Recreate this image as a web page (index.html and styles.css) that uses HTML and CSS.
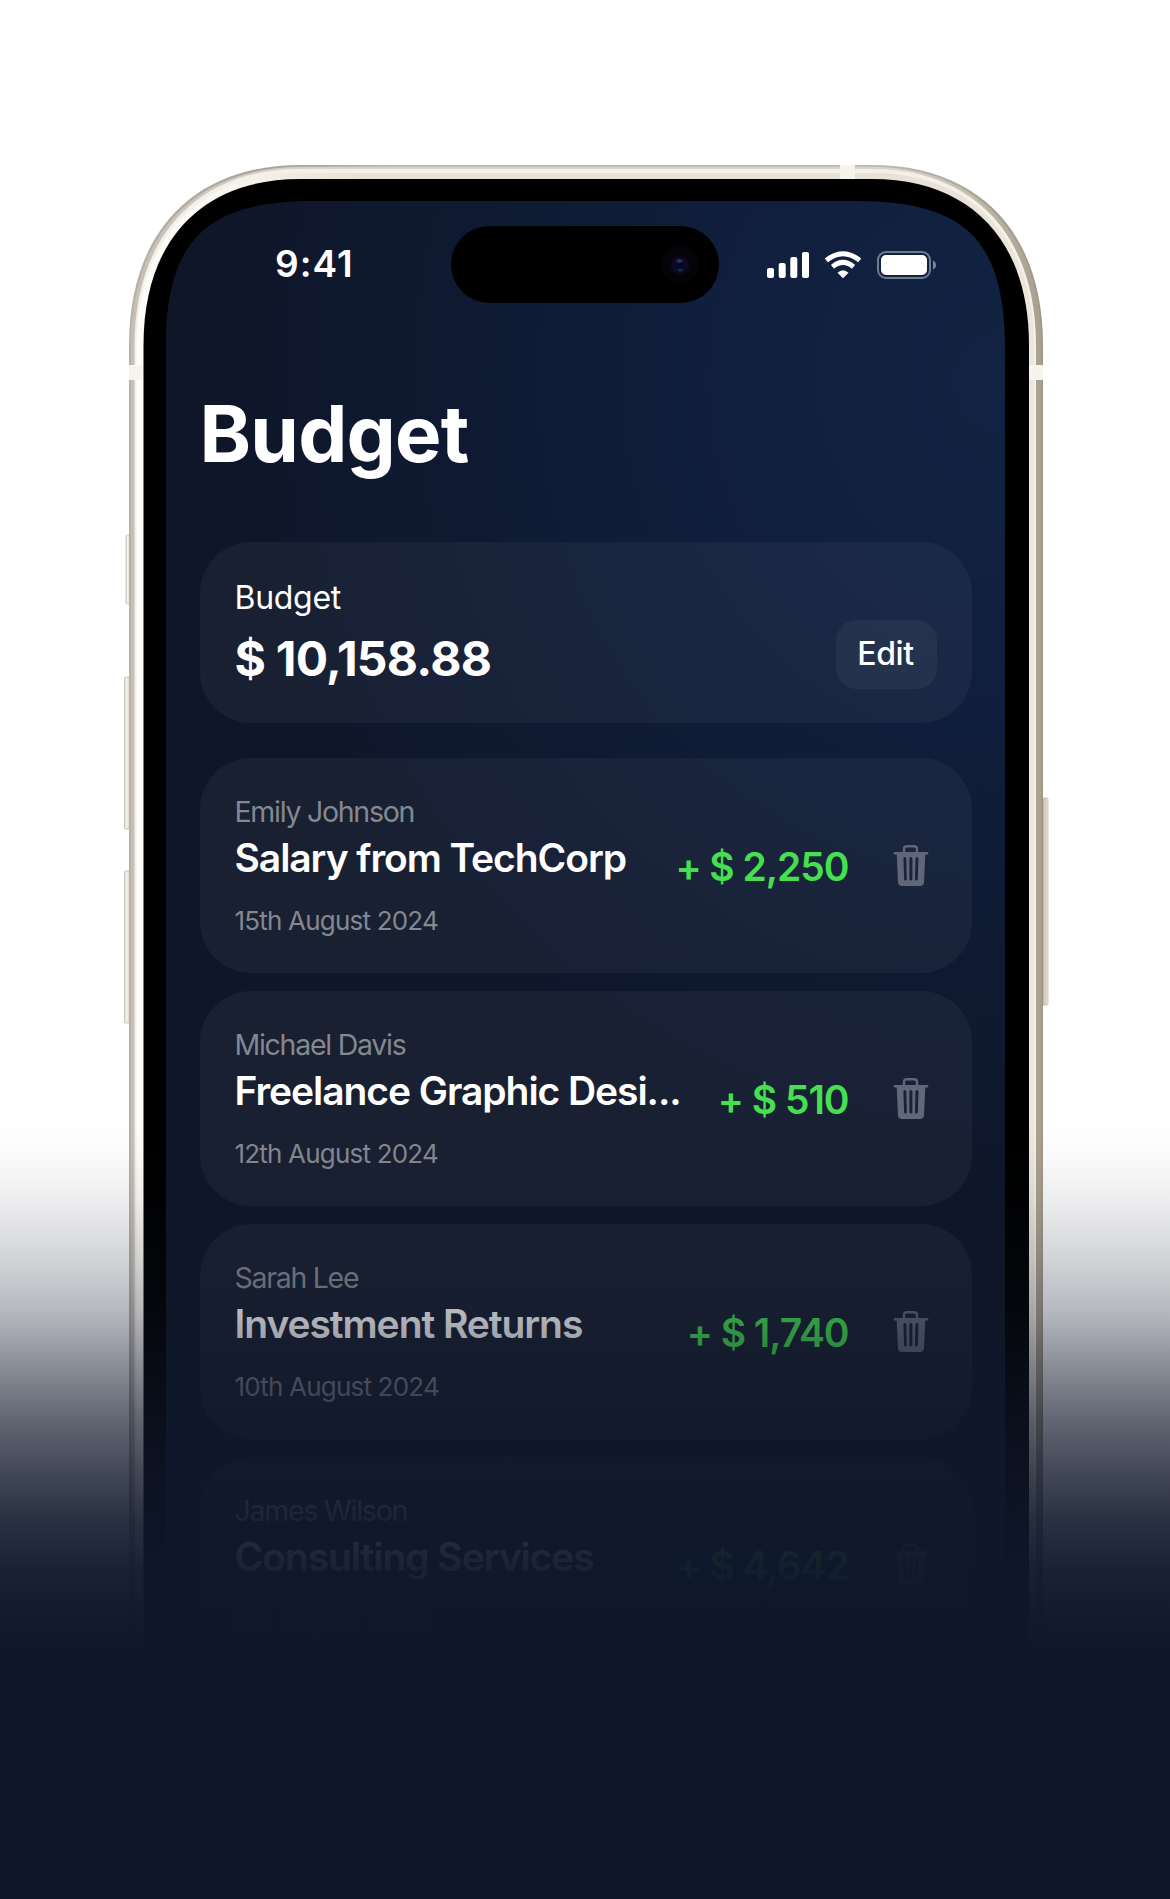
FILE: index.html
```html
<!DOCTYPE html>
<html lang="en">
<head>
<meta charset="utf-8">
<title>Budget</title>
<link rel="stylesheet" href="styles.css">
</head>
<body>
<svg class="defs" width="0" height="0" aria-hidden="true">
  <symbol id="trash" viewBox="0 0 36 43">
    <path fill="none" stroke="currentColor" stroke-width="2.4" d="M11 9V5.2Q11 2.2 14 2.2H21Q24 2.2 24 5.2V9"/>
    <path fill="currentColor" fill-rule="evenodd" d="M1.8 8H34.2Q35.4 8 35.4 9.3T34.2 10.6H32.3L31 38Q30.8 42 27 42H9Q5.200 42 5 38L3.700 10.600H1.800Q.6 10.600.6 9.300T1.800 8ZM10.400 14.500Q10.500 13 11.800 13T13.300 14.500L13.800 35.200Q13.700 36.600 12.500 36.600T11.100 35.200ZM16.400 14.500Q16.500 13 17.900 13T19.400 14.500V35.200Q19.300 36.600 17.900 36.600T16.400 35.200ZM22.500 14.500Q22.700 13 24 13T25.400 14.500L24.800 35.200Q24.600 36.600 23.400 36.600T22 35.200Z"/>
  </symbol>
</svg>
<main class="stage">
  <svg class="frame" viewBox="0 0 1170 1899" aria-hidden="true">
    <defs>
      <linearGradient id="key" x1="0" x2="1" y1="0" y2="0"><stop offset="0" stop-color="#d8d4cb"/><stop offset=".3" stop-color="#f6f4ee"/><stop offset="1" stop-color="#d8cfbf"/></linearGradient>
      <linearGradient id="keyR" x1="0" x2="1" y1="0" y2="0"><stop offset="0" stop-color="#aaa090"/><stop offset=".4" stop-color="#d5c9b5"/><stop offset=".7" stop-color="#ddd2c0"/><stop offset="1" stop-color="#f4f2ed"/></linearGradient>
      <linearGradient id="metal" gradientUnits="userSpaceOnUse" x1="129" x2="1043" y1="0" y2="0"><stop offset="0" stop-color="#bab2a8"/><stop offset=".15" stop-color="#a9a299"/><stop offset=".3" stop-color="#c2bfb0"/><stop offset=".8" stop-color="#c2bfb0"/><stop offset="1" stop-color="#9f9686"/></linearGradient>
      <linearGradient id="band" gradientUnits="userSpaceOnUse" x1="129" x2="1043" y1="0" y2="0"><stop offset="0" stop-color="#c6bfb6"/><stop offset=".2" stop-color="#d9d4ca"/><stop offset=".85" stop-color="#d9d4ca"/><stop offset="1" stop-color="#a89f8f"/></linearGradient>
      <linearGradient id="inner" gradientUnits="userSpaceOnUse" x1="129" x2="1043" y1="0" y2="0"><stop offset="0" stop-color="#fffefa"/><stop offset=".1" stop-color="#f8f6f1"/><stop offset=".25" stop-color="#e8e1d6"/><stop offset=".9" stop-color="#e8e1d6"/><stop offset="1" stop-color="#eee7dc"/></linearGradient>
      <radialGradient id="glass"><stop offset="0" stop-color="#04051c"/><stop offset=".6" stop-color="#0b0b28"/><stop offset="1" stop-color="#060408"/></radialGradient>
    </defs>
    <g stroke="#b9b2a6" stroke-width=".7">
      <rect x="126" y="535" width="5" height="69" rx="1.500" fill="url(#key)"/>
      <rect x="124.500" y="677" width="6" height="152" rx="1.500" fill="url(#key)"/>
      <rect x="124.500" y="871" width="6" height="152" rx="1.500" fill="url(#key)"/>
      <rect x="1042" y="798" width="6" height="207" rx="1.500" fill="url(#keyR)"/>
    </g>
    <path d="M129 1899V345C129 234 192 165 300 165H872C980 165 1043 234 1043 345V1899Z" fill="url(#metal)"/>
    <path d="M131 1899V345C131 236 194 167 300 167H872C978 167 1041.500 236 1041.500 345V1899Z" fill="url(#band)"/>
    <path d="M134.500 1899V345C134.500 238 196 169 300 169H872C976 169 1036 238 1036 345V1899Z" fill="#f3f0e9"/>
    <path d="M136.500 1899V345C136.500 241 198 173 300 173H872C974 173 1034 241 1034 345V1899Z" fill="url(#inner)"/>
    <path d="M129 365H143V380H129ZM840 165H855V179H840ZM1029 365H1043V380H1029Z" fill="#f5f4ef"/>
    <path d="M143.500 1899V345C143.500 240 202 179 300 179H872C970 179 1029 240 1029 345V1899Z" fill="#000"/>
  </svg>
  <section class="screen">
    <header class="status">
      <span class="time">9:41</span>
      <span class="island"><svg width="40" height="40" viewBox="0 0 40 40"><circle cx="20" cy="20" r="19" fill="#050307"/><circle cx="20" cy="20" r="10.500" fill="url(#glass)"/><ellipse cx="19.500" cy="16" rx="3" ry="1.800" fill="#2f2d5c"/><ellipse cx="20.500" cy="25" rx="2.500" ry="1.800" fill="#122c40"/></svg></span>
      <svg class="signals" width="170" height="28" viewBox="0 0 170 28">
        <g fill="#fff"><rect x="0" y="17" width="7" height="10" rx="2"/><rect x="11.700" y="12" width="7" height="15" rx="2"/><rect x="23.300" y="6" width="7" height="21" rx="2"/><rect x="35" y="1" width="7" height="26" rx="2"/>
        <path d="M76 27.300L70.500 21.800Q76 16.800 81.500 21.800Z"/></g>
        <path d="M59.300 9.300Q76-4 92.700 9.300M65.500 15.800Q76 7 86.500 15.800" fill="none" stroke="#fff" stroke-width="4.900"/>
        <rect x="111" y="1" width="52" height="26" rx="8" fill="none" stroke="#fff" stroke-opacity=".4" stroke-width="2"/>
        <rect x="114" y="4" width="46" height="20" rx="5" fill="#fff"/>
        <path d="M166 9.500Q169 11 169 14T166 18.500Z" fill="#fff" fill-opacity=".45"/>
      </svg>
    </header>
    <h1 class="title">Budget</h1>
    <article class="card total">
      <div><p class="label">Budget</p><p class="sum">$ 10,158.88</p></div>
      <button class="edit">Edit</button>
    </article>
    <div class="list">
      <article class="card item"><div class="info"><p class="who">Emily Johnson</p><p class="what">Salary from TechCorp</p><p class="date">15th August 2024</p></div><span class="amount">+ $ 2,250</span><svg class="trash"><use href="#trash"/></svg></article>
      <article class="card item"><div class="info"><p class="who">Michael Davis</p><p class="what">Freelance Graphic Desi...</p><p class="date">12th August 2024</p></div><span class="amount">+ $ 510</span><svg class="trash"><use href="#trash"/></svg></article>
      <article class="card item"><div class="info"><p class="who">Sarah Lee</p><p class="what">Investment Returns</p><p class="date">10th August 2024</p></div><span class="amount">+ $ 1,740</span><svg class="trash"><use href="#trash"/></svg></article>
      <article class="card item"><div class="info"><p class="who">James Wilson</p><p class="what">Consulting Services</p><p class="date">8th August 2024</p></div><span class="amount">+ $ 4,642</span><svg class="trash"><use href="#trash"/></svg></article>
    </div>
  </section>
  <div class="fade"></div>
</main>
</body>
</html>
```
FILE: styles.css
```css
* { box-sizing: border-box; }
body { margin: 0; background: #fff; font-family: Inter, "Liberation Sans", sans-serif; color: #fff; }
p, h1 { margin: 0; }
.defs { position: absolute; }
.stage { position: relative; height: 1899px; padding: 201px 165px 0 165.500px; overflow: hidden; }
.frame { position: absolute; inset: 0; width: 1170px; height: 1899px; }
.screen {
  position: relative; height: 1698px; padding: 25px 33.500px 0 34px;
  clip-path: path("M0 1698V150C0 39 39 0 150 0H689.500C800.500 0 839.500 39 839.500 150V1698Z");
  background: radial-gradient(ellipse 800px 850px at 100% 180px, #122343 0%, #101f3d 35%, #0f1a32 68%, #0e1628 100%);
}
.status { height: 78px; display: grid; grid-template-columns: 251px 268px 1fr; align-items: start; }
.time { padding-left: 75.500px; font-size: 37px; font-weight: 600; letter-spacing: 1px; line-height: 76px; }
.island { height: 77px; border-radius: 39px; background: #000; display: flex; align-items: center; justify-content: flex-end; padding-right: 19px; }
.signals { margin: 25px 0 0 48px; }
.title { margin-top: 81px; height: 97px; line-height: 97px; font-size: 78px; font-weight: 700; letter-spacing: -.75px; }
.card { border-radius: 51px; background: rgba(255,255,255,.045); display: flex; }
.total { margin-top: 60px; height: 181px; padding: 34px 34.500px 0 35px; justify-content: space-between; }
.label { font-size: 32px; line-height: 44px; letter-spacing: -.3px; }
.sum { font-size: 48px; font-weight: 700; line-height: 58px; margin-top: 10px; letter-spacing: -.75px; }
.edit { margin-top: 43.500px; width: 101px; height: 69px; border: 0; border-radius: 21px; background: rgba(255,255,255,.05); color: #fff; font: 500 32px Inter, sans-serif; letter-spacing: -.4px; padding: 0 2px 2px 0; }
.list { margin-top: 34.500px; display: grid; gap: 17.500px; }
.item { height: 215.500px; padding: 35px 42.500px 0 35px; }
.info { flex: 1; white-space: nowrap; }
.who { font-size: 28.500px; line-height: 38px; letter-spacing: -1.270px; color: rgba(255,255,255,.47); }
.what { font-size: 39px; line-height: 48px; font-weight: 600; margin-top: 3px; letter-spacing: -1.060px; }
.date { font-size: 26px; line-height: 36px; letter-spacing: -.8px; color: rgba(255,255,255,.47); margin-top: 21px; }
.amount { font-size: 39px; font-weight: 600; line-height: 48px; letter-spacing: -1.050px; color: #45df50; margin-top: 50px; white-space: nowrap; }
.trash { width: 36px; height: 43px; margin: 51px 0 0 44.500px; color: #616779; }
.fade {
  position: absolute; inset: 1120px 0 0;
  background: linear-gradient(rgba(15,23,42,0), rgba(15,23,42,.02) 35px, rgba(15,23,42,.075) 80px, rgba(15,23,42,.19) 140px, rgba(15,23,42,.31) 193px, rgba(15,23,42,.5) 250px, rgba(15,23,42,.66) 300px, rgba(15,23,42,.785) 350px, rgba(15,23,42,.89) 400px, rgba(15,23,42,.955) 450px, rgba(15,23,42,.99) 500px, #0f172a 530px);
}
```
